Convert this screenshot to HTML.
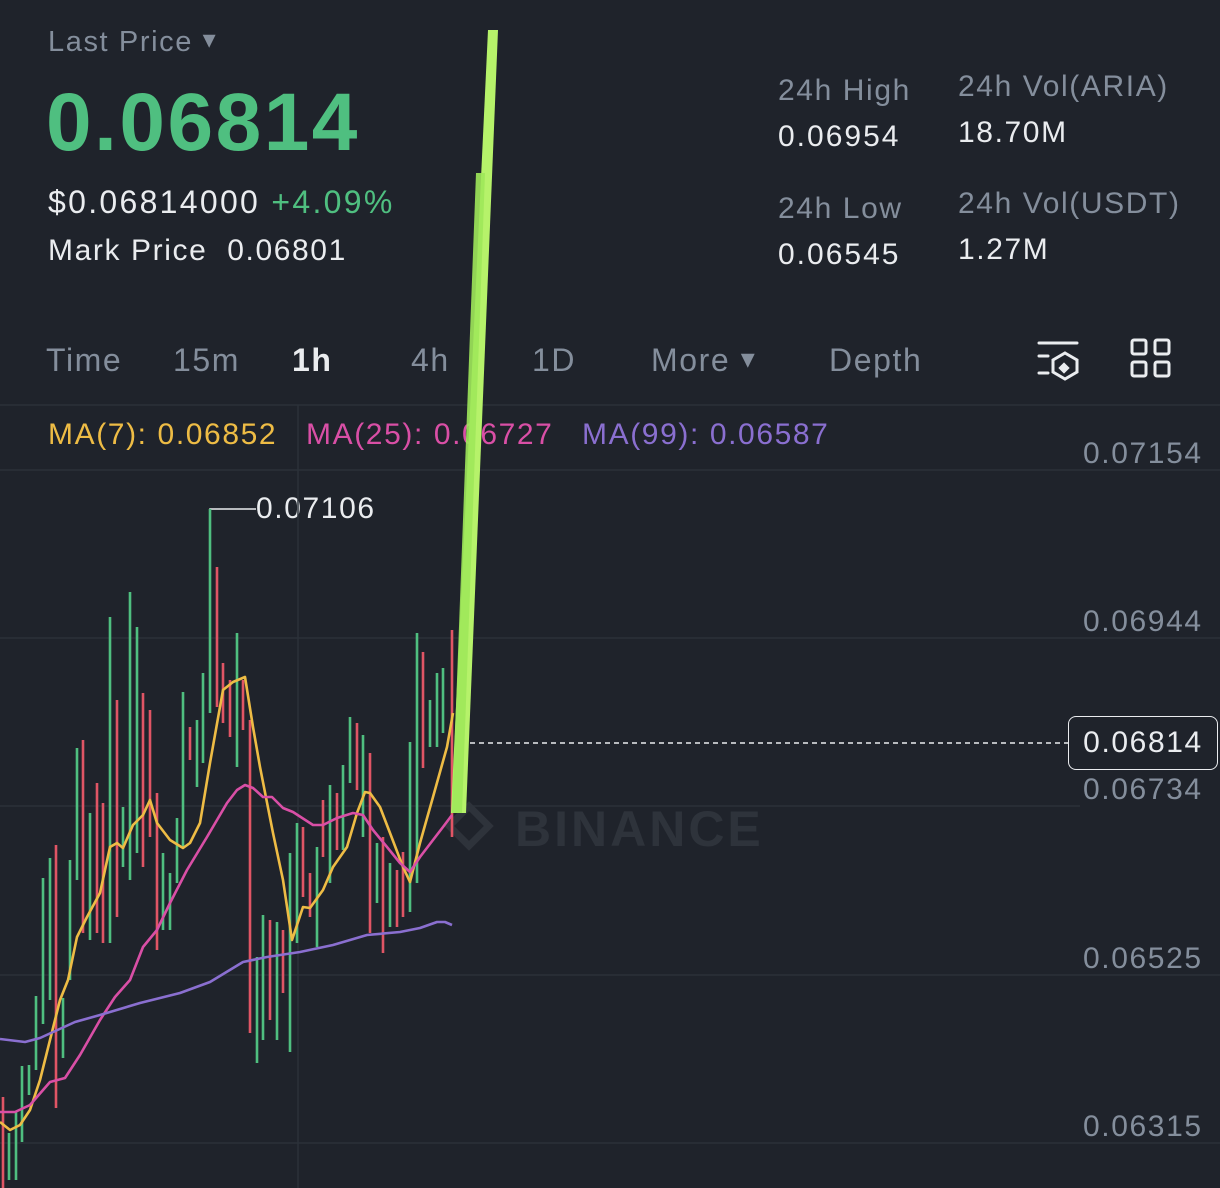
<!DOCTYPE html>
<html><head><meta charset="utf-8"><style>
body{margin:0;width:1220px;height:1188px;background:#1f232b;overflow:hidden;font-family:"Liberation Sans",sans-serif;position:relative}
.t{position:absolute;white-space:nowrap;letter-spacing:1.6px}
</style></head><body>
<div class="t" style="left:48px;top:26px;font-size:29px;color:#848e9c">Last Price <span style="font-size:26px;position:relative;top:-3px">▾</span></div>
<div class="t" style="left:46px;top:76px;font-size:82px;font-weight:bold;color:#4fbf80;letter-spacing:2.5px">0.06814</div>
<div class="t" style="left:48px;top:184px;font-size:32px;color:#eaecef;letter-spacing:2.3px">$0.06814000 <span style="color:#4fbf80">+4.09%</span></div>
<div class="t" style="left:48px;top:234px;font-size:30px;color:#eaecef;letter-spacing:1.6px">Mark Price&nbsp; 0.06801</div>

<div class="t" style="left:778px;top:74px;font-size:30px;color:#848e9c">24h High</div>
<div class="t" style="left:778px;top:120px;font-size:30px;color:#eaecef;letter-spacing:2px">0.06954</div>
<div class="t" style="left:958px;top:70px;font-size:30px;color:#848e9c">24h Vol(ARIA)</div>
<div class="t" style="left:958px;top:116px;font-size:30px;color:#eaecef">18.70M</div>
<div class="t" style="left:778px;top:192px;font-size:30px;color:#848e9c">24h Low</div>
<div class="t" style="left:778px;top:238px;font-size:30px;color:#eaecef;letter-spacing:2px">0.06545</div>
<div class="t" style="left:958px;top:187px;font-size:30px;color:#848e9c">24h Vol(USDT)</div>
<div class="t" style="left:958px;top:233px;font-size:30px;color:#eaecef">1.27M</div>

<div class="t" style="left:46px;top:342px;font-size:32px;color:#848e9c">Time</div>
<div class="t" style="left:173px;top:342px;font-size:32px;color:#848e9c">15m</div>
<div class="t" style="left:292px;top:342px;font-size:32px;color:#eaecef;font-weight:bold">1h</div>
<div class="t" style="left:411px;top:342px;font-size:32px;color:#848e9c">4h</div>
<div class="t" style="left:532px;top:342px;font-size:32px;color:#848e9c">1D</div>
<div class="t" style="left:651px;top:342px;font-size:32px;color:#848e9c">More <span style="font-size:28px;position:relative;top:-3px">▾</span></div>
<div class="t" style="left:829px;top:342px;font-size:32px;color:#848e9c">Depth</div>

<div class="t" style="left:48px;top:418px;font-size:30px;color:#eebc45">MA(7): 0.06852</div>
<div class="t" style="left:306px;top:418px;font-size:30px;color:#d94fa6">MA(25): 0.06727</div>
<div class="t" style="left:582px;top:418px;font-size:30px;color:#8a6fd0">MA(99): 0.06587</div>

<div class="t" style="left:1083px;top:437px;font-size:30px;color:#848e9c">0.07154</div>
<div class="t" style="left:1083px;top:605px;font-size:30px;color:#848e9c">0.06944</div>
<div class="t" style="left:1083px;top:773px;font-size:30px;color:#848e9c">0.06734</div>
<div class="t" style="left:1083px;top:942px;font-size:30px;color:#848e9c">0.06525</div>
<div class="t" style="left:1083px;top:1110px;font-size:30px;color:#848e9c">0.06315</div>
<div class="t" style="left:256px;top:492px;font-size:30px;color:#eaecef">0.07106</div>
<div class="t" style="left:515px;top:800px;font-size:50px;font-weight:bold;color:#2e333b;letter-spacing:3px">BINANCE</div>
<div class="t" style="left:1068px;top:716px;width:150px;height:54px;border:1.5px solid #eaecef;border-radius:8px;box-sizing:border-box;font-size:30px;color:#eaecef;line-height:52px;text-align:center">0.06814</div>

<svg width="1220" height="1188" style="position:absolute;left:0;top:0">
<g stroke="#2b3139" stroke-width="1.5">
<line x1="0" y1="405" x2="1220" y2="405"/>
<line x1="0" y1="470" x2="1220" y2="470"/><line x1="0" y1="638" x2="1220" y2="638"/>
<line x1="0" y1="806" x2="1080" y2="806"/><line x1="0" y1="975" x2="1220" y2="975"/>
<line x1="0" y1="1143" x2="1220" y2="1143"/><line x1="298" y1="405" x2="298" y2="1188"/>
</g>
<g stroke="#eaecef" stroke-width="3" fill="none" stroke-linecap="round">
<line x1="1039" y1="343" x2="1077" y2="343"/><line x1="1039" y1="356" x2="1048" y2="356"/><line x1="1039" y1="373" x2="1048" y2="373"/>
<polygon points="1065,353 1077,360 1077,372 1065,379 1053,372 1053,360"/>
<rect x="1132" y="340" width="14" height="14" rx="2"/><rect x="1155" y="340" width="14" height="14" rx="2"/>
<rect x="1132" y="362" width="14" height="14" rx="2"/><rect x="1155" y="362" width="14" height="14" rx="2"/>
</g>
<rect x="1060" y="364" width="8" height="8" fill="#eaecef" transform="rotate(45 1064 368)"/>
<g fill="none" stroke="#2e333b" stroke-width="7"><rect x="455" y="812" width="28" height="28" transform="rotate(45 469 826)"/></g>
<line x1="470" y1="743" x2="1068" y2="743" stroke="#eaecef" stroke-width="1.5" stroke-dasharray="5,4"/>
<polyline points="210,560 210,509 256,509" fill="none" stroke="#eaecef" stroke-width="1.5"/>
<g stroke-width="2.6">
<g stroke="#4fbf80">
<line x1="9" y1="1133" x2="9" y2="1180"/><line x1="16" y1="1112" x2="16" y2="1180"/><line x1="22" y1="1066" x2="22" y2="1142"/><line x1="29" y1="1065" x2="29" y2="1095"/><line x1="36" y1="996" x2="36" y2="1070"/><line x1="43" y1="878" x2="43" y2="1024"/><line x1="50" y1="858" x2="50" y2="1000"/><line x1="63" y1="998" x2="63" y2="1058"/>
<line x1="70" y1="860" x2="70" y2="980"/><line x1="77" y1="748" x2="77" y2="880"/><line x1="90" y1="813" x2="90" y2="940"/><line x1="110" y1="617" x2="110" y2="943"/><line x1="123" y1="807" x2="123" y2="867"/><line x1="130" y1="592" x2="130" y2="880"/><line x1="137" y1="627" x2="137" y2="853"/>
<line x1="163" y1="853" x2="163" y2="930"/><line x1="170" y1="873" x2="170" y2="930"/><line x1="177" y1="818" x2="177" y2="883"/><line x1="183" y1="692" x2="183" y2="847"/><line x1="197" y1="720" x2="197" y2="787"/><line x1="203" y1="673" x2="203" y2="763"/><line x1="210" y1="509" x2="210" y2="713"/><line x1="237" y1="633" x2="237" y2="767"/>
<line x1="257" y1="957" x2="257" y2="1063"/><line x1="263" y1="915" x2="263" y2="1040"/><line x1="277" y1="922" x2="277" y2="1040"/><line x1="290" y1="853" x2="290" y2="1052"/><line x1="297" y1="823" x2="297" y2="943"/><line x1="317" y1="847" x2="317" y2="947"/><line x1="330" y1="785" x2="330" y2="883"/><line x1="343" y1="765" x2="343" y2="850"/><line x1="350" y1="717" x2="350" y2="783"/><line x1="363" y1="735" x2="363" y2="837"/>
<line x1="377" y1="843" x2="377" y2="903"/><line x1="390" y1="863" x2="390" y2="927"/><line x1="410" y1="742" x2="410" y2="912"/><line x1="417" y1="633" x2="417" y2="883"/><line x1="430" y1="700" x2="430" y2="747"/><line x1="437" y1="673" x2="437" y2="747"/><line x1="443" y1="668" x2="443" y2="733"/>
</g>
<g stroke="#e05565">
<line x1="3" y1="1097" x2="3" y2="1188"/><line x1="56" y1="845" x2="56" y2="1108"/><line x1="83" y1="740" x2="83" y2="933"/><line x1="97" y1="783" x2="97" y2="933"/><line x1="103" y1="803" x2="103" y2="943"/><line x1="117" y1="700" x2="117" y2="917"/><line x1="143" y1="693" x2="143" y2="867"/><line x1="150" y1="710" x2="150" y2="837"/><line x1="157" y1="793" x2="157" y2="950"/><line x1="190" y1="727" x2="190" y2="760"/>
<line x1="217" y1="567" x2="217" y2="707"/><line x1="223" y1="663" x2="223" y2="723"/><line x1="230" y1="680" x2="230" y2="737"/><line x1="243" y1="680" x2="243" y2="730"/><line x1="250" y1="720" x2="250" y2="1033"/>
<line x1="270" y1="920" x2="270" y2="1020"/><line x1="283" y1="930" x2="283" y2="993"/><line x1="303" y1="827" x2="303" y2="897"/><line x1="310" y1="873" x2="310" y2="917"/><line x1="323" y1="800" x2="323" y2="857"/><line x1="337" y1="793" x2="337" y2="850"/><line x1="357" y1="723" x2="357" y2="790"/><line x1="370" y1="753" x2="370" y2="933"/><line x1="383" y1="837" x2="383" y2="953"/><line x1="397" y1="870" x2="397" y2="927"/><line x1="403" y1="852" x2="403" y2="917"/><line x1="423" y1="652" x2="423" y2="768"/><line x1="452" y1="630" x2="452" y2="837"/>
</g>
</g>
<g fill="none" stroke-width="2.6" stroke-linejoin="round">
<polyline stroke="#eebc45" points="0,1122 10,1130 20,1125 30,1110 40,1080 50,1040 60,1000 68,980 77,937 87,917 100,893 110,847 117,843 123,848 133,825 143,815 150,800 157,823 170,840 183,848 190,843 200,823 210,763 223,690 233,682 245,677 253,727 260,767 273,833 283,880 292,940 303,907 310,908 323,890 333,867 347,847 357,813 365,792 370,793 380,807 390,833 403,867 410,882 420,843 433,797 447,747 453,713"/>
<polyline stroke="#d94fa6" points="0,1112 15,1112 30,1105 50,1082 65,1078 80,1055 100,1020 115,997 130,980 143,947 157,930 170,903 187,870 207,837 227,803 237,790 245,785 253,788 263,797 272,797 283,808 293,812 313,825 323,825 337,818 353,813 363,815 373,830 387,847 400,863 410,872 420,857 433,840 443,827 452,815"/>
<polyline stroke="#8a6fd0" points="0,1039 25,1042 40,1038 75,1022 100,1015 140,1003 180,993 210,982 243,962 267,957 300,952 333,945 367,935 400,932 420,928 437,922 445,922 452,925"/>
</g>
<polygon points="488,30 498,30 466,813 451,813" fill="#b6f26a"/>
<polygon points="476,173 485,173 462,813 452,813" fill="#9ee85a" opacity="0.9"/>
</svg>
</body></html>
